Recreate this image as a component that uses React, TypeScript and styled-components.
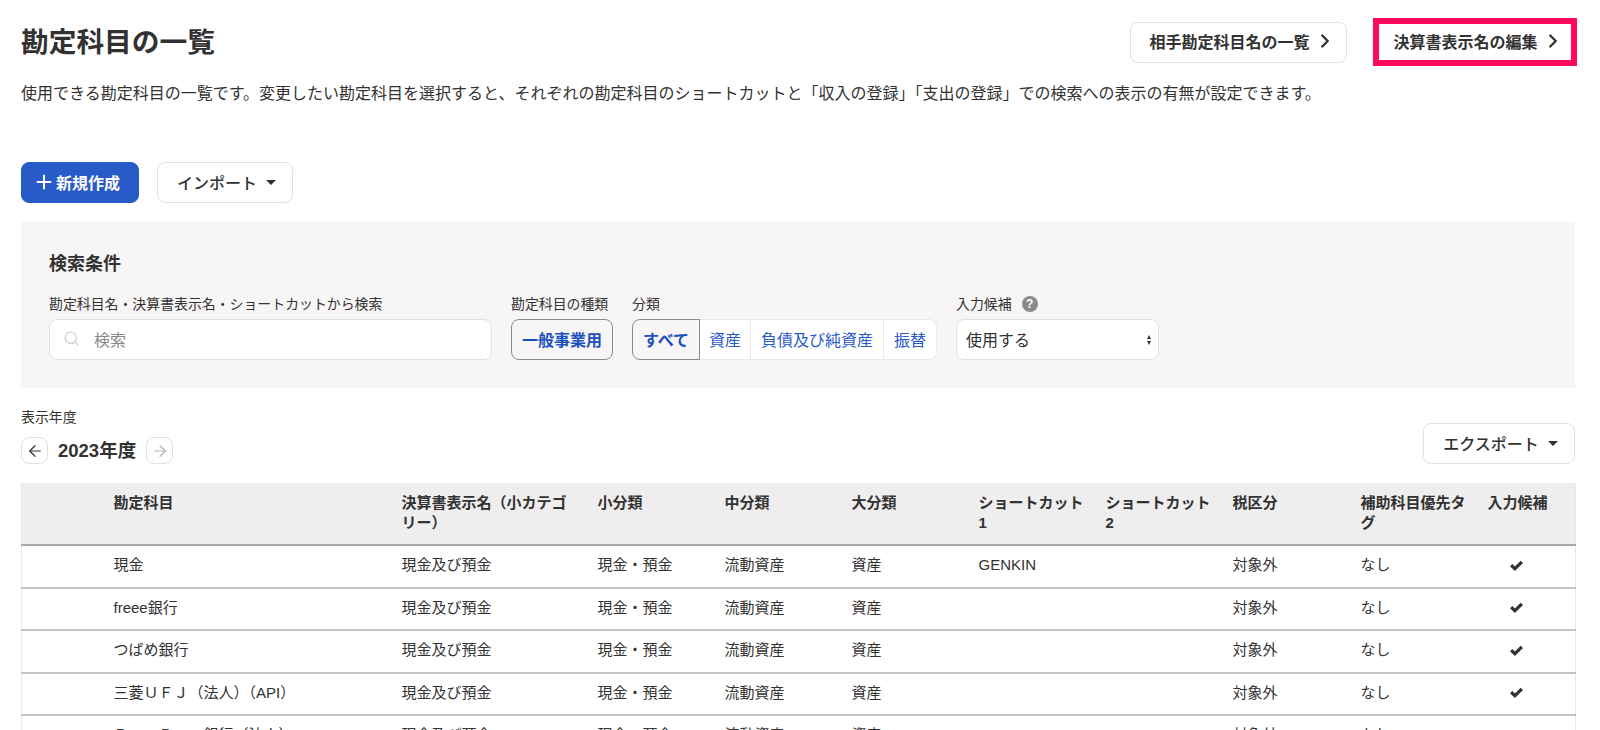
import { createGlobalStyle, styled } from 'styled-components'
import { ChevronRight, Plus, Search, ArrowLeft, ArrowRight } from 'lucide-react'

const GlobalStyle = createGlobalStyle`
    html, body {
        margin: 0;
        height: 730px;
        overflow: hidden;
        background: #fff;
    }
    body {
        font-family: "Liberation Sans", "Noto Sans CJK JP", sans-serif;
        color: #323232;
    }
`

const Page = styled.main`
    padding: 0 25px 0 21px;
`

const Header = styled.header`
    height: 81px;
    margin-right: -2px;
    display: flex;
    align-items: flex-start;
    justify-content: space-between;
    padding-top: 18px;
    box-sizing: border-box;
`

const Title = styled.h1`
    margin: 2px 0 0;
    font-size: 27.7px;
    line-height: 46px;
    font-weight: 700;
`

const HeaderLinks = styled.div`
    display: flex;
    align-items: center;
    gap: 26px;
`

const Button = styled.button`
    height: 41px;
    box-sizing: border-box;
    display: inline-flex;
    align-items: center;
    justify-content: center;
    gap: 4px;
    padding: 0 0 2px;
    background: #fff;
    border: 1px solid #e3e0e0;
    border-radius: 8px;
    font: inherit;
    font-size: 16px;
    font-weight: 700;
    color: #323232;
`

const LinkButton = styled(Button)`
    width: 217px;
    padding-left: 8px;
`

const HighlightFrame = styled.div`
    width: 204px;
    height: 48px;
    box-sizing: border-box;
    display: flex;
    border: 6px solid #ff0a5a;
    background: #fff;
`

const FramedLink = styled(Button)`
    flex: 1;
    height: auto;
    padding-left: 7px;
    border: 0;
    border-radius: 0;
`

const Description = styled.p`
    margin: 0;
    padding-top: 1px;
    font-size: 16px;
    line-height: 24px;
`

const Actions = styled.div`
    display: flex;
    gap: 18px;
    margin-top: 56px;
`

const PrimaryButton = styled(Button)`
    width: 118px;
    gap: 1px;
    padding-right: 7px;
    background: #285ac8;
    border-color: #285ac8;
    color: #fff;
`

const DropButton = styled(Button)<{ $width: number }>`
    width: ${(p) => p.$width}px;
    padding-left: 3px;
    font-weight: 500;
    gap: 9px;
`

const Caret = styled.span`
    width: 0;
    height: 0;
    margin-top: 1px;
    border-left: 5px solid transparent;
    border-right: 5px solid transparent;
    border-top: 5px solid #323232;
`

const SearchPanel = styled.section`
    margin-top: 19px;
    height: 166px;
    box-sizing: border-box;
    padding: 28px 28px 0;
    background: #f7f5f5;
`

const PanelTitle = styled.h2`
    margin: 0 0 15px;
    font-size: 18px;
    line-height: 28px;
    font-weight: 700;
`

const Fields = styled.div`
    display: flex;
    align-items: flex-start;
`

const Field = styled.div<{ $gap: number }>`
    margin-right: ${(p) => p.$gap}px;
`

const Label = styled.div`
    display: flex;
    align-items: center;
    gap: 10px;
    height: 20px;
    margin-bottom: 5px;
    padding-top: 1px;
    font-size: 13.9px;
    line-height: 20px;
`

const HelpIcon = styled.span`
    width: 16px;
    height: 16px;
    border-radius: 50%;
    background: #8c8989;
    color: #fff;
    font-size: 12px;
    font-weight: 700;
    line-height: 16px;
    text-align: center;
`

const SearchBox = styled.div`
    width: 443px;
    height: 41px;
    box-sizing: border-box;
    display: flex;
    align-items: center;
    gap: 14px;
    padding: 0 0 2px 13px;
    background: #fff;
    border: 1px solid #e3e0e0;
    border-radius: 8px;
    color: #8c8989;
    font-size: 16px;
    svg {
        color: #d7d2d2;
    }
`

const ToggleButton = styled.div`
    width: 102px;
    height: 41px;
    box-sizing: border-box;
    display: flex;
    align-items: center;
    justify-content: center;
    padding-bottom: 2px;
    background: #f7f5f5;
    border: 1px solid #8c8989;
    border-radius: 8px;
    color: #1a50c0;
    font-size: 16px;
    font-weight: 700;
`

const Segments = styled.div`
    display: flex;
    height: 41px;
`

const Segment = styled.div<{ $width: number; $active?: boolean }>`
    width: ${(p) => p.$width}px;
    box-sizing: border-box;
    display: flex;
    align-items: center;
    justify-content: center;
    padding-bottom: 2px;
    background: ${(p) => (p.$active ? '#f7f5f5' : '#fff')};
    border: 1px solid ${(p) => (p.$active ? '#8c8989' : '#e9e7e7')};
    border-left-width: ${(p) => (p.$active ? 1 : 0)}px;
    color: ${(p) => (p.$active ? '#1a50c0' : '#285ac8')};
    font-size: 16px;
    font-weight: ${(p) => (p.$active ? 700 : 400)};
    &:first-child {
        border-radius: 8px 0 0 8px;
    }
    &:last-child {
        border-radius: 0 8px 8px 0;
    }
`

const SelectBox = styled.div`
    width: 203px;
    height: 41px;
    box-sizing: border-box;
    display: flex;
    align-items: center;
    justify-content: space-between;
    padding: 0 7px 2px 9px;
    background: #fff;
    border: 1px solid #e3e0e0;
    border-radius: 8px;
    font-size: 16px;
`

const SelectArrows = styled.span`
    display: flex;
    flex-direction: column;
    gap: 2px;
    margin-top: 2px;
    &::before,
    &::after {
        content: '';
        border-left: 2.5px solid transparent;
        border-right: 2.5px solid transparent;
    }
    &::before {
        border-bottom: 4px solid #323232;
    }
    &::after {
        border-top: 4px solid #323232;
    }
`

const YearBar = styled.div`
    display: flex;
    align-items: flex-end;
    justify-content: space-between;
    height: 75px;
    margin-top: 1px;
`

const YearLabel = styled.div`
    font-size: 13.9px;
    line-height: 20px;
    margin-bottom: 10px;
`

const YearStepper = styled.div`
    display: flex;
    align-items: center;
    gap: 10px;
`

const YearValue = styled.span`
    font-size: 18.5px;
    font-weight: 700;
    line-height: 27px;
`

const StepButton = styled.span<{ $disabled?: boolean }>`
    width: 27px;
    height: 27px;
    box-sizing: border-box;
    display: flex;
    align-items: center;
    justify-content: center;
    border: 1px solid #e3e0e0;
    border-radius: 8px;
    color: ${(p) => (p.$disabled ? '#b4b0b0' : '#323232')};
`

const Table = styled.table`
    width: 1554px;
    margin-top: 19px;
    table-layout: fixed;
    border-collapse: collapse;
    border-left: 1px solid #e9e7e7;
    border-right: 1px solid #e9e7e7;
`

const HeadCell = styled.th`
    height: 62px;
    box-sizing: border-box;
    padding: 10px 16px 0 0;
    background: #efeded;
    border-bottom: 2px solid #aaa7a7;
    font-size: 15px;
    font-weight: 700;
    line-height: 20px;
    text-align: left;
    vertical-align: top;
`

const Cell = styled.td`
    height: 42.5px;
    box-sizing: border-box;
    padding: 0 16px 2px 0;
    border-bottom: 2px solid #c6c3c3;
    font-size: 15px;
    line-height: 20px;
    text-align: left;
`

const CheckIcon = styled.svg`
    display: block;
    width: 13px;
    height: 11px;
    margin: 0 0 0 22px;
    fill: #323232;
`

const columns = [92, 288, 196, 127, 127, 127, 127, 127, 128, 127, 88]

const headers = [
    '',
    '勘定科目',
    '決算書表示名（小カテゴリ\u2060ー）',
    '小分類',
    '中分類',
    '大分類',
    'ショートカット1',
    'ショートカット2',
    '税区分',
    '補助科目優先タグ',
    '入力候補',
]

const rows = [
    { name: '現金', shortcut: 'GENKIN' },
    { name: 'freee銀行', shortcut: '' },
    { name: 'つばめ銀行', shortcut: '' },
    { name: '三菱ＵＦＪ（法人）（API）', shortcut: '' },
    { name: 'ＰａｙＰａｙ銀行（法人）', shortcut: '' },
]

export default function App() {
    return (
        <>
            <GlobalStyle />
            <Page>
                <Header>
                    <Title>勘定科目の一覧</Title>
                    <HeaderLinks>
                        <LinkButton>
                            相手勘定科目名の一覧
                            <ChevronRight size={22} strokeWidth={2.6} />
                        </LinkButton>
                        <HighlightFrame>
                            <FramedLink>
                                決算書表示名の編集
                                <ChevronRight size={22} strokeWidth={2.6} />
                            </FramedLink>
                        </HighlightFrame>
                    </HeaderLinks>
                </Header>
                <Description>
                    使用できる勘定科目の一覧です。変更したい勘定科目を選択すると、それぞれの勘定科目のショートカットと「収入の登録」「支出の登録」での検索への表示の有無が設定できます。
                </Description>

                <Actions>
                    <PrimaryButton>
                        <Plus size={22} strokeWidth={2.2} />
                        新規作成
                    </PrimaryButton>
                    <DropButton $width={136}>
                        インポート
                        <Caret />
                    </DropButton>
                </Actions>

                <SearchPanel>
                    <PanelTitle>検索条件</PanelTitle>
                    <Fields>
                        <Field $gap={19}>
                            <Label>勘定科目名・決算書表示名・ショートカットから検索</Label>
                            <SearchBox>
                                <Search size={17} />
                                検索
                            </SearchBox>
                        </Field>
                        <Field $gap={19}>
                            <Label>勘定科目の種類</Label>
                            <ToggleButton>一般事業用</ToggleButton>
                        </Field>
                        <Field $gap={19}>
                            <Label>分類</Label>
                            <Segments>
                                <Segment $width={68} $active>すべて</Segment>
                                <Segment $width={51}>資産</Segment>
                                <Segment $width={133}>負債及び純資産</Segment>
                                <Segment $width={53}>振替</Segment>
                            </Segments>
                        </Field>
                        <Field $gap={0}>
                            <Label>
                                入力候補
                                <HelpIcon>?</HelpIcon>
                            </Label>
                            <SelectBox>
                                使用する
                                <SelectArrows />
                            </SelectBox>
                        </Field>
                    </Fields>
                </SearchPanel>

                <YearBar>
                    <div>
                        <YearLabel>表示年度</YearLabel>
                        <YearStepper>
                            <StepButton>
                                <ArrowLeft size={18} strokeWidth={1.6} />
                            </StepButton>
                            <YearValue>2023年度</YearValue>
                            <StepButton $disabled>
                                <ArrowRight size={18} strokeWidth={1.6} />
                            </StepButton>
                        </YearStepper>
                    </div>
                    <DropButton $width={152}>
                        エクスポート
                        <Caret />
                    </DropButton>
                </YearBar>

                <Table>
                    <colgroup>
                        {columns.map((width, i) => (
                            <col key={i} width={width} />
                        ))}
                    </colgroup>
                    <thead>
                        <tr>
                            {headers.map((label, i) => (
                                <HeadCell key={i}>{label}</HeadCell>
                            ))}
                        </tr>
                    </thead>
                    <tbody>
                        {rows.map((row) => (
                            <tr key={row.name}>
                                <Cell />
                                <Cell>{row.name}</Cell>
                                <Cell>現金及び預金</Cell>
                                <Cell>現金・預金</Cell>
                                <Cell>流動資産</Cell>
                                <Cell>資産</Cell>
                                <Cell>{row.shortcut}</Cell>
                                <Cell />
                                <Cell>対象外</Cell>
                                <Cell>なし</Cell>
                                <Cell>
                                    <CheckIcon viewBox="0 0 13 11">
                                        <path d="M0 6.2 2.3 3.9 4.9 6.5 10.7 0.7 13 3 4.9 11z" />
                                    </CheckIcon>
                                </Cell>
                            </tr>
                        ))}
                    </tbody>
                </Table>
            </Page>
        </>
    )
}
